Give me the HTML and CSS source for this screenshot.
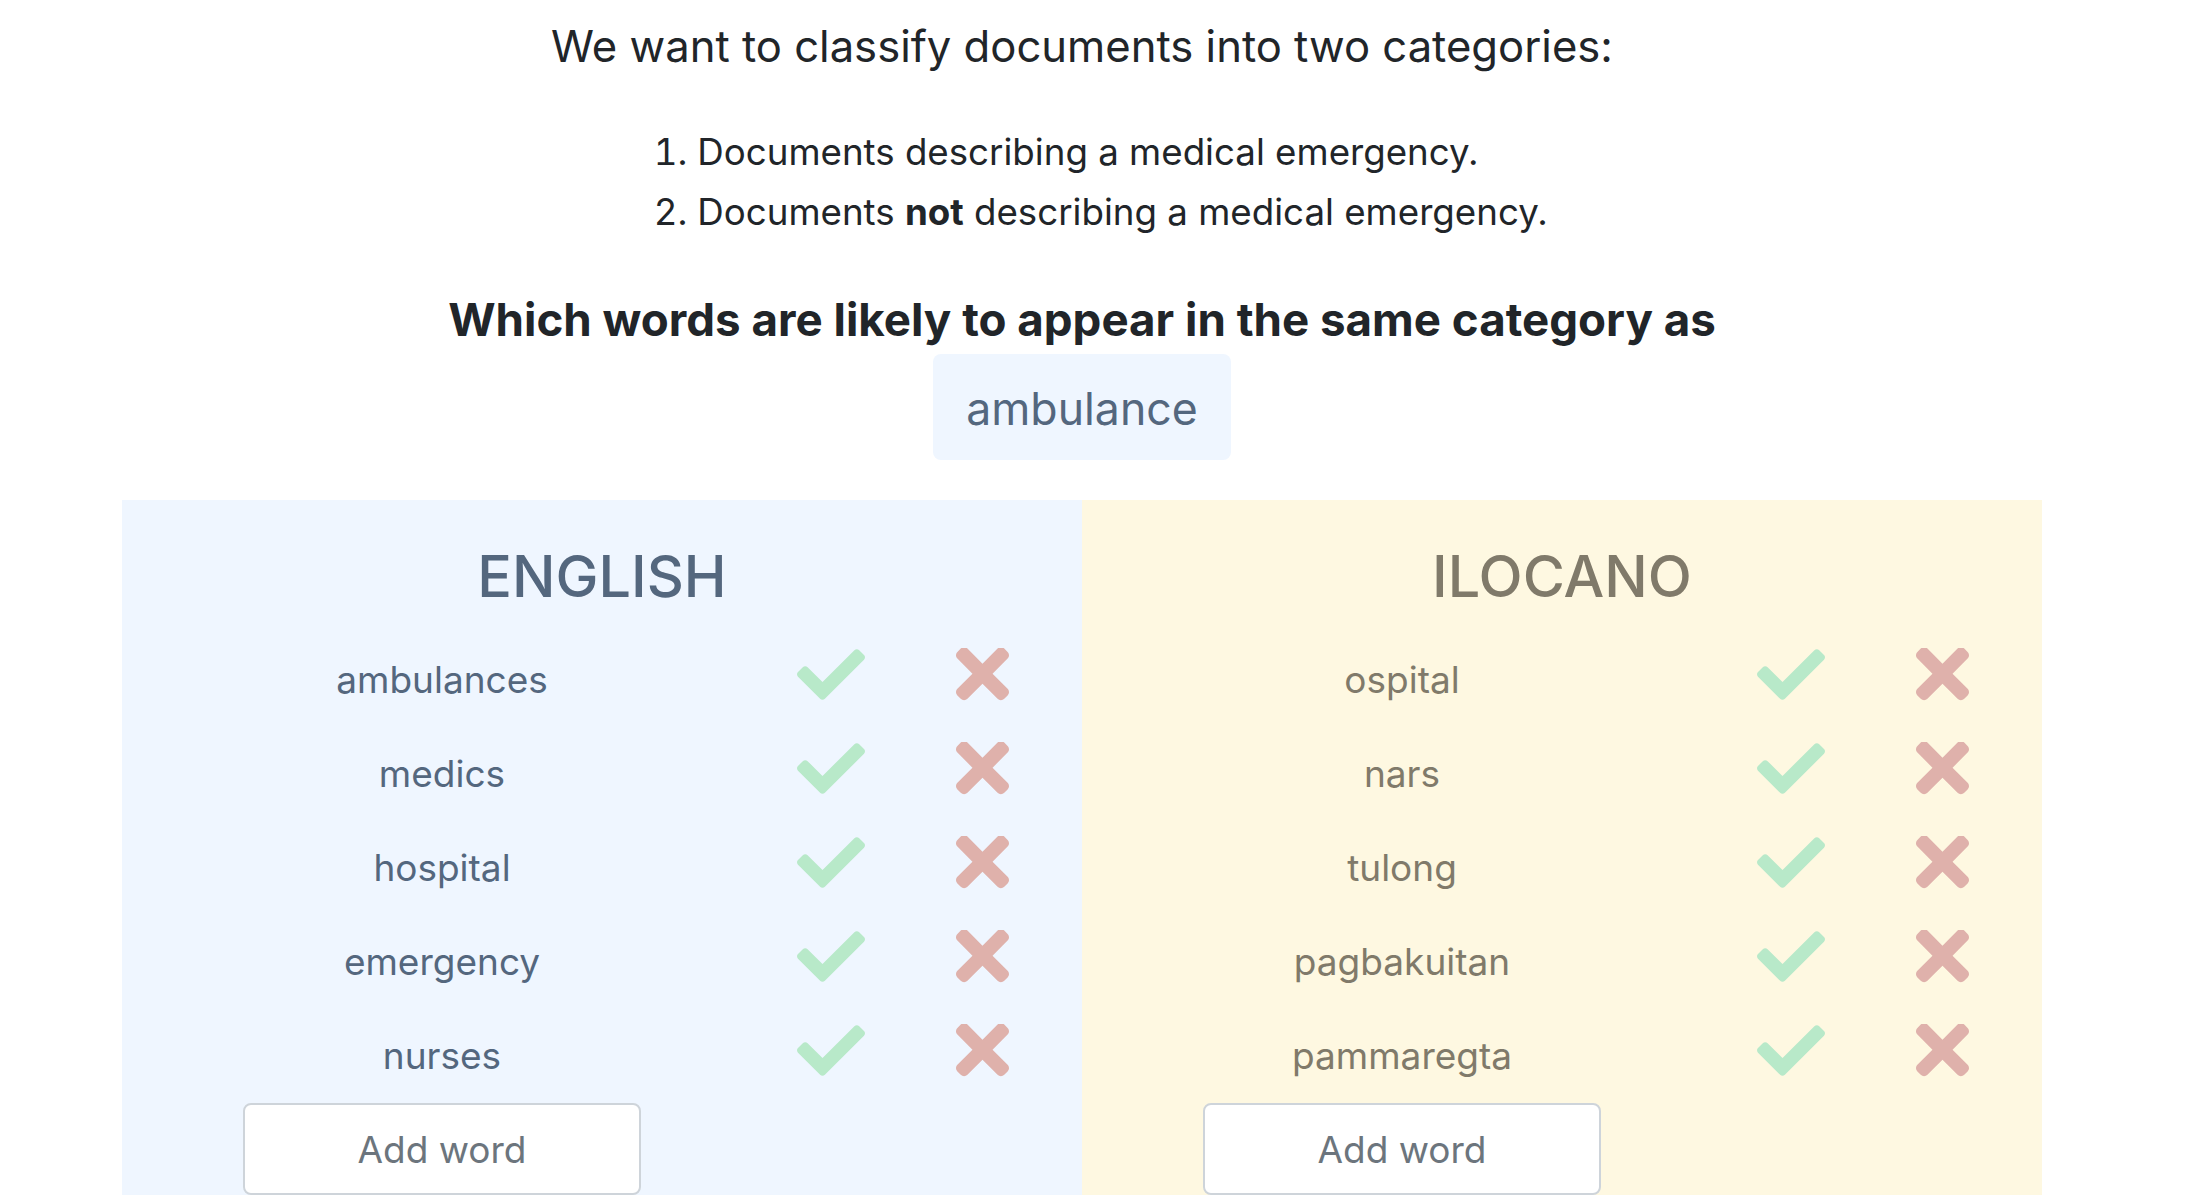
FILE: index.html
```html
<!DOCTYPE html>
<html lang="en">
<head>
<meta charset="utf-8">
<title>Classify words</title>
<link rel="stylesheet" href="styles.css">
</head>
<body>
<main class="page">
  <section class="intro">
    <h1 class="title">We want to classify documents into two categories:</h1>
    <ol class="cats">
      <li>Documents describing a medical emergency.</li>
      <li>Documents <strong>not</strong> describing a medical emergency.</li>
    </ol>
    <h2 class="question">Which words are likely to appear in the same category as</h2>
    <div class="seed">ambulance</div>
  </section>

  <section class="panels">
    <div class="panel panel-en">
      <h3 class="lang">ENGLISH</h3>
      <div class="rows">
        <div class="row"><span class="word">ambulances</span><span class="cell cell-ok"><svg class="ok" viewBox="0 64 512 384"><path d="M173.898 439.404l-166.4-166.4c-9.997-9.997-9.997-26.206 0-36.204l36.203-36.204c9.997-9.998 26.207-9.998 36.204 0L192 312.69 432.095 72.596c9.997-9.997 26.207-9.997 36.204 0l36.203 36.204c9.997 9.997 9.997 26.206 0 36.204l-294.4 294.401c-9.998 9.997-26.207 9.997-36.204-.001z"/></svg></span><span class="cell cell-no"><svg class="no" viewBox="0 88 352 347"><path d="M242.72 256l100.07-100.07c12.28-12.28 12.28-32.19 0-44.48l-22.24-22.24c-12.28-12.28-32.19-12.28-44.48 0L176 189.28 75.93 89.21c-12.28-12.28-32.19-12.28-44.48 0L9.21 111.45c-12.28 12.28-12.28 32.19 0 44.48L109.28 256 9.21 356.07c-12.28 12.28-12.28 32.19 0 44.48l22.24 22.24c12.28 12.28 32.2 12.28 44.48 0L176 322.72l100.07 100.07c12.28 12.28 32.2 12.28 44.48 0l22.24-22.24c12.28-12.28 12.28-32.19 0-44.48L242.72 256z"/></svg></span></div>
        <div class="row"><span class="word">medics</span><span class="cell cell-ok"><svg class="ok" viewBox="0 64 512 384"><path d="M173.898 439.404l-166.4-166.4c-9.997-9.997-9.997-26.206 0-36.204l36.203-36.204c9.997-9.998 26.207-9.998 36.204 0L192 312.69 432.095 72.596c9.997-9.997 26.207-9.997 36.204 0l36.203 36.204c9.997 9.997 9.997 26.206 0 36.204l-294.4 294.401c-9.998 9.997-26.207 9.997-36.204-.001z"/></svg></span><span class="cell cell-no"><svg class="no" viewBox="0 88 352 347"><path d="M242.72 256l100.07-100.07c12.28-12.28 12.28-32.19 0-44.48l-22.24-22.24c-12.28-12.28-32.19-12.28-44.48 0L176 189.28 75.93 89.21c-12.28-12.28-32.19-12.28-44.48 0L9.21 111.45c-12.28 12.28-12.28 32.19 0 44.48L109.28 256 9.21 356.07c-12.28 12.28-12.28 32.19 0 44.48l22.24 22.24c12.28 12.28 32.2 12.28 44.48 0L176 322.72l100.07 100.07c12.28 12.28 32.2 12.28 44.48 0l22.24-22.24c12.28-12.28 12.28-32.19 0-44.48L242.72 256z"/></svg></span></div>
        <div class="row"><span class="word">hospital</span><span class="cell cell-ok"><svg class="ok" viewBox="0 64 512 384"><path d="M173.898 439.404l-166.4-166.4c-9.997-9.997-9.997-26.206 0-36.204l36.203-36.204c9.997-9.998 26.207-9.998 36.204 0L192 312.69 432.095 72.596c9.997-9.997 26.207-9.997 36.204 0l36.203 36.204c9.997 9.997 9.997 26.206 0 36.204l-294.4 294.401c-9.998 9.997-26.207 9.997-36.204-.001z"/></svg></span><span class="cell cell-no"><svg class="no" viewBox="0 88 352 347"><path d="M242.72 256l100.07-100.07c12.28-12.28 12.28-32.19 0-44.48l-22.24-22.24c-12.28-12.28-32.19-12.28-44.48 0L176 189.28 75.93 89.21c-12.28-12.28-32.19-12.28-44.48 0L9.21 111.45c-12.28 12.28-12.28 32.19 0 44.48L109.28 256 9.21 356.07c-12.28 12.28-12.28 32.19 0 44.48l22.24 22.24c12.28 12.28 32.2 12.28 44.48 0L176 322.72l100.07 100.07c12.28 12.28 32.2 12.28 44.48 0l22.24-22.24c12.28-12.28 12.28-32.19 0-44.48L242.72 256z"/></svg></span></div>
        <div class="row"><span class="word">emergency</span><span class="cell cell-ok"><svg class="ok" viewBox="0 64 512 384"><path d="M173.898 439.404l-166.4-166.4c-9.997-9.997-9.997-26.206 0-36.204l36.203-36.204c9.997-9.998 26.207-9.998 36.204 0L192 312.69 432.095 72.596c9.997-9.997 26.207-9.997 36.204 0l36.203 36.204c9.997 9.997 9.997 26.206 0 36.204l-294.4 294.401c-9.998 9.997-26.207 9.997-36.204-.001z"/></svg></span><span class="cell cell-no"><svg class="no" viewBox="0 88 352 347"><path d="M242.72 256l100.07-100.07c12.28-12.28 12.28-32.19 0-44.48l-22.24-22.24c-12.28-12.28-32.19-12.28-44.48 0L176 189.28 75.93 89.21c-12.28-12.28-32.19-12.28-44.48 0L9.21 111.45c-12.28 12.28-12.28 32.19 0 44.48L109.28 256 9.21 356.07c-12.28 12.28-12.28 32.19 0 44.48l22.24 22.24c12.28 12.28 32.2 12.28 44.48 0L176 322.72l100.07 100.07c12.28 12.28 32.2 12.28 44.48 0l22.24-22.24c12.28-12.28 12.28-32.19 0-44.48L242.72 256z"/></svg></span></div>
        <div class="row"><span class="word">nurses</span><span class="cell cell-ok"><svg class="ok" viewBox="0 64 512 384"><path d="M173.898 439.404l-166.4-166.4c-9.997-9.997-9.997-26.206 0-36.204l36.203-36.204c9.997-9.998 26.207-9.998 36.204 0L192 312.69 432.095 72.596c9.997-9.997 26.207-9.997 36.204 0l36.203 36.204c9.997 9.997 9.997 26.206 0 36.204l-294.4 294.401c-9.998 9.997-26.207 9.997-36.204-.001z"/></svg></span><span class="cell cell-no"><svg class="no" viewBox="0 88 352 347"><path d="M242.72 256l100.07-100.07c12.28-12.28 12.28-32.19 0-44.48l-22.24-22.24c-12.28-12.28-32.19-12.28-44.48 0L176 189.28 75.93 89.21c-12.28-12.28-32.19-12.28-44.48 0L9.21 111.45c-12.28 12.28-12.28 32.19 0 44.48L109.28 256 9.21 356.07c-12.28 12.28-12.28 32.19 0 44.48l22.24 22.24c12.28 12.28 32.2 12.28 44.48 0L176 322.72l100.07 100.07c12.28 12.28 32.2 12.28 44.48 0l22.24-22.24c12.28-12.28 12.28-32.19 0-44.48L242.72 256z"/></svg></span></div>
        <div class="row row-add"><button class="add" type="button">Add word</button></div>
      </div>
    </div>

    <div class="panel panel-il">
      <h3 class="lang">ILOCANO</h3>
      <div class="rows">
        <div class="row"><span class="word">ospital</span><span class="cell cell-ok"><svg class="ok" viewBox="0 64 512 384"><path d="M173.898 439.404l-166.4-166.4c-9.997-9.997-9.997-26.206 0-36.204l36.203-36.204c9.997-9.998 26.207-9.998 36.204 0L192 312.69 432.095 72.596c9.997-9.997 26.207-9.997 36.204 0l36.203 36.204c9.997 9.997 9.997 26.206 0 36.204l-294.4 294.401c-9.998 9.997-26.207 9.997-36.204-.001z"/></svg></span><span class="cell cell-no"><svg class="no" viewBox="0 88 352 347"><path d="M242.72 256l100.07-100.07c12.28-12.28 12.28-32.19 0-44.48l-22.24-22.24c-12.28-12.28-32.19-12.28-44.48 0L176 189.28 75.93 89.21c-12.28-12.28-32.19-12.28-44.48 0L9.21 111.45c-12.28 12.28-12.28 32.19 0 44.48L109.28 256 9.21 356.07c-12.28 12.28-12.28 32.19 0 44.48l22.24 22.24c12.28 12.28 32.2 12.28 44.48 0L176 322.72l100.07 100.07c12.28 12.28 32.2 12.28 44.48 0l22.24-22.24c12.28-12.28 12.28-32.19 0-44.48L242.72 256z"/></svg></span></div>
        <div class="row"><span class="word">nars</span><span class="cell cell-ok"><svg class="ok" viewBox="0 64 512 384"><path d="M173.898 439.404l-166.4-166.4c-9.997-9.997-9.997-26.206 0-36.204l36.203-36.204c9.997-9.998 26.207-9.998 36.204 0L192 312.69 432.095 72.596c9.997-9.997 26.207-9.997 36.204 0l36.203 36.204c9.997 9.997 9.997 26.206 0 36.204l-294.4 294.401c-9.998 9.997-26.207 9.997-36.204-.001z"/></svg></span><span class="cell cell-no"><svg class="no" viewBox="0 88 352 347"><path d="M242.72 256l100.07-100.07c12.28-12.28 12.28-32.19 0-44.48l-22.24-22.24c-12.28-12.28-32.19-12.28-44.48 0L176 189.28 75.93 89.21c-12.28-12.28-32.19-12.28-44.48 0L9.21 111.45c-12.28 12.28-12.28 32.19 0 44.48L109.28 256 9.21 356.07c-12.28 12.28-12.28 32.19 0 44.48l22.24 22.24c12.28 12.28 32.2 12.28 44.48 0L176 322.72l100.07 100.07c12.28 12.28 32.2 12.28 44.48 0l22.24-22.24c12.28-12.28 12.28-32.19 0-44.48L242.72 256z"/></svg></span></div>
        <div class="row"><span class="word">tulong</span><span class="cell cell-ok"><svg class="ok" viewBox="0 64 512 384"><path d="M173.898 439.404l-166.4-166.4c-9.997-9.997-9.997-26.206 0-36.204l36.203-36.204c9.997-9.998 26.207-9.998 36.204 0L192 312.69 432.095 72.596c9.997-9.997 26.207-9.997 36.204 0l36.203 36.204c9.997 9.997 9.997 26.206 0 36.204l-294.4 294.401c-9.998 9.997-26.207 9.997-36.204-.001z"/></svg></span><span class="cell cell-no"><svg class="no" viewBox="0 88 352 347"><path d="M242.72 256l100.07-100.07c12.28-12.28 12.28-32.19 0-44.48l-22.24-22.24c-12.28-12.28-32.19-12.28-44.48 0L176 189.28 75.93 89.21c-12.28-12.28-32.19-12.28-44.48 0L9.21 111.45c-12.28 12.28-12.28 32.19 0 44.48L109.28 256 9.21 356.07c-12.28 12.28-12.28 32.19 0 44.48l22.24 22.24c12.28 12.28 32.2 12.28 44.48 0L176 322.72l100.07 100.07c12.28 12.28 32.2 12.28 44.48 0l22.24-22.24c12.28-12.28 12.28-32.19 0-44.48L242.72 256z"/></svg></span></div>
        <div class="row"><span class="word">pagbakuitan</span><span class="cell cell-ok"><svg class="ok" viewBox="0 64 512 384"><path d="M173.898 439.404l-166.4-166.4c-9.997-9.997-9.997-26.206 0-36.204l36.203-36.204c9.997-9.998 26.207-9.998 36.204 0L192 312.69 432.095 72.596c9.997-9.997 26.207-9.997 36.204 0l36.203 36.204c9.997 9.997 9.997 26.206 0 36.204l-294.4 294.401c-9.998 9.997-26.207 9.997-36.204-.001z"/></svg></span><span class="cell cell-no"><svg class="no" viewBox="0 88 352 347"><path d="M242.72 256l100.07-100.07c12.28-12.28 12.28-32.19 0-44.48l-22.24-22.24c-12.28-12.28-32.19-12.28-44.48 0L176 189.28 75.93 89.21c-12.28-12.28-32.19-12.28-44.48 0L9.21 111.45c-12.28 12.28-12.28 32.19 0 44.48L109.28 256 9.21 356.07c-12.28 12.28-12.28 32.19 0 44.48l22.24 22.24c12.28 12.28 32.2 12.28 44.48 0L176 322.72l100.07 100.07c12.28 12.28 32.2 12.28 44.48 0l22.24-22.24c12.28-12.28 12.28-32.19 0-44.48L242.72 256z"/></svg></span></div>
        <div class="row"><span class="word">pammaregta</span><span class="cell cell-ok"><svg class="ok" viewBox="0 64 512 384"><path d="M173.898 439.404l-166.4-166.4c-9.997-9.997-9.997-26.206 0-36.204l36.203-36.204c9.997-9.998 26.207-9.998 36.204 0L192 312.69 432.095 72.596c9.997-9.997 26.207-9.997 36.204 0l36.203 36.204c9.997 9.997 9.997 26.206 0 36.204l-294.4 294.401c-9.998 9.997-26.207 9.997-36.204-.001z"/></svg></span><span class="cell cell-no"><svg class="no" viewBox="0 88 352 347"><path d="M242.72 256l100.07-100.07c12.28-12.28 12.28-32.19 0-44.48l-22.24-22.24c-12.28-12.28-32.19-12.28-44.48 0L176 189.28 75.93 89.21c-12.28-12.28-32.19-12.28-44.48 0L9.21 111.45c-12.28 12.28-12.28 32.19 0 44.48L109.28 256 9.21 356.07c-12.28 12.28-12.28 32.19 0 44.48l22.24 22.24c12.28 12.28 32.2 12.28 44.48 0L176 322.72l100.07 100.07c12.28 12.28 32.2 12.28 44.48 0l22.24-22.24c12.28-12.28 12.28-32.19 0-44.48L242.72 256z"/></svg></span></div>
        <div class="row row-add"><button class="add" type="button">Add word</button></div>
      </div>
    </div>
  </section>
</main>
</body>
</html>
```

FILE: styles.css
```css
html, body {
  margin: 0;
  padding: 0;
  background: #ffffff;
}

body {
  font-family: Inter, "Noto Sans", "Liberation Sans", sans-serif;
  color: #212529;
}

.page {
  width: 1920px;
  margin-left: 122px;
}

.intro {
  text-align: center;
}

.title {
  margin: 17px 0 0;
  font-size: 43.6px;
  line-height: 60px;
  font-weight: 400;
}

.cats {
  display: inline-block;
  margin: 45px 0 0;
  padding: 0 0 0 81px;
  text-align: left;
  font-size: 36.7px;
  line-height: 60px;
}

.cats strong {
  font-weight: 700;
}

.question {
  margin: 48px 0 0;
  font-size: 45.7px;
  line-height: 60px;
  font-weight: 700;
}

.seed {
  display: inline-block;
  margin-top: 4px;
  padding: 27px 33px 23px;
  font-size: 44.6px;
  line-height: 56px;
  color: #54677e;
  background: #eff6ff;
  border-radius: 8px;
}

.panels {
  display: flex;
  margin-top: 40px;
}

.panel {
  flex: 0 0 960px;
  padding-top: 41px;
  box-sizing: border-box;
}

.panel-en {
  background: #eff6ff;
  color: #54677e;
}

.panel-il {
  background: #fef8e1;
  color: #807a6a;
}

.lang {
  margin: 0;
  text-align: center;
  font-size: 57.5px;
  line-height: 70px;
  font-weight: 500;
}

.rows {
  margin-top: 22px;
}

.row {
  display: grid;
  grid-template-columns: 640px 160px 160px;
  align-items: center;
  height: 94px;
}

.word {
  text-align: center;
  font-size: 37px;
  line-height: 50px;
}

.cell {
  display: flex;
  align-items: center;
  padding-bottom: 12px;
}

.cell-ok {
  padding-left: 35px;
}

.cell-no {
  padding-left: 34px;
}

.ok {
  width: 68px;
  height: 51px;
  fill: #b8e9c9;
}

.no {
  width: 53px;
  height: 53px;
  fill: #dfb1ab;
}

.row-add {
  align-items: start;
}

.add {
  justify-self: center;
  width: 398px;
  height: 92px;
  font-family: inherit;
  font-size: 37px;
  color: #6c757d;
  background: #ffffff;
  border: 2px solid #ced4da;
  border-radius: 8px;
}
```
